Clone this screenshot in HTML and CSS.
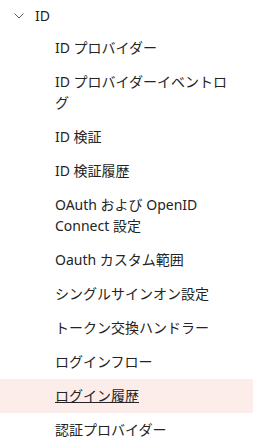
FILE: index.html
```html
<!DOCTYPE html>
<html lang="ja">
<head>
  <meta charset="UTF-8" />
  <meta name="viewport" content="width=device-width, initial-scale=1" />
  <title>ID</title>
  <link rel="stylesheet" href="styles.css">
</head>
<body>
  <nav class="nav-group">
    <div class="nav-header">
      <svg class="chevron" width="10" height="6" viewBox="0 0 10 6">
        <path d="M0.5 0.5 L5 5 L9.5 0.5" fill="none" stroke="#605e5c" stroke-width="1" />
      </svg>
      <span>ID</span>
    </div>
    <ul class="nav-list">
      <li class="nav-item">ID プロバイダー</li>
      <li class="nav-item">ID プロバイダーイベントログ</li>
      <li class="nav-item">ID 検証</li>
      <li class="nav-item">ID 検証履歴</li>
      <li class="nav-item">OAuth および OpenID Connect 設定</li>
      <li class="nav-item">Oauth カスタム範囲</li>
      <li class="nav-item">シングルサインオン設定</li>
      <li class="nav-item">トークン交換ハンドラー</li>
      <li class="nav-item">ログインフロー</li>
      <li class="nav-item active"><a href="#">ログイン履歴</a></li>
      <li class="nav-item">認証プロバイダー</li>
    </ul>
  </nav>
</body>
</html>
```
FILE: styles.css
```css
body {
  margin: 0;
  background: #ffffff;
  font-family: "Segoe UI", "Noto Sans", "Noto Sans CJK JP", sans-serif;
  font-size: 14px;
  color: #242424;
}
.nav-header {
  display: flex;
  align-items: center;
  height: 31px;
  padding-left: 14px;
  line-height: 21px;
}
.chevron {
  margin-right: 11px;
  margin-top: 1px;
}
.nav-list {
  list-style: none;
  margin: 0;
  padding: 0;
}
.nav-item {
  padding: 6px 16px 7px 55px;
  line-height: 21px;
}
.nav-item.active {
  background: #fdedea;
}
.nav-item a {
  color: #242424;
  text-decoration: underline;
}
```
